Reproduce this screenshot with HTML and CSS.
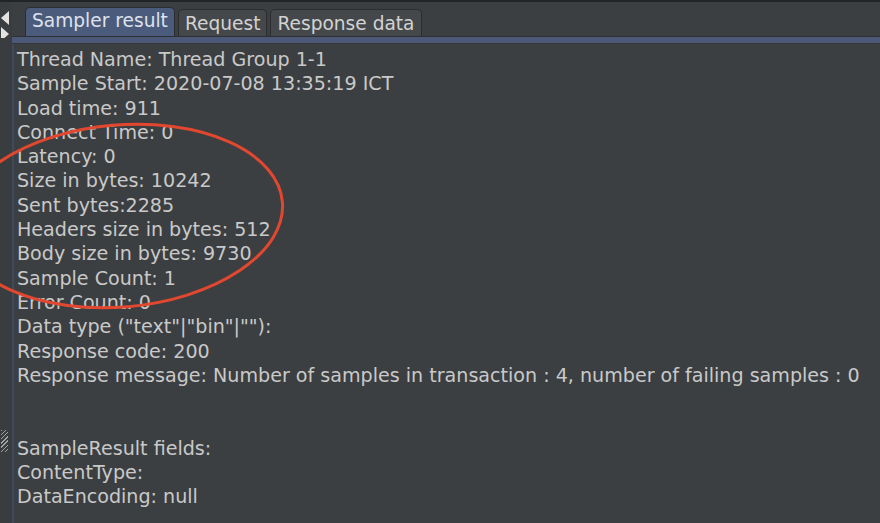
FILE: index.html
```html
<!DOCTYPE html>
<html lang="en">
<head>
  <meta charset="UTF-8" />
  <title>Sampler result</title>
  <link rel="stylesheet" href="styles.css">
</head>
<body>
  <div id="window">
    <!-- 왼쪽 분할 바 -->
    <div class="split-bar">
      <div class="arrows">
        <svg width="12" height="30" viewBox="0 0 12 30">
          <polygon points="9,3 9,17 1,10" fill="#e2e2e2"/>
          <polygon points="1,19 1,33 9,26" fill="#e2e2e2"/>
        </svg>
      </div>
      <div class="grip"></div>
    </div>

    <div class="main">
      <div class="tabs">
        <div class="tab active">Sampler result</div>
        <div class="tab">Request</div>
        <div class="tab">Response data</div>
      </div>
      <div class="tab-line"></div>

      <div class="result-panel">
        <div class="line">Thread Name: Thread Group 1-1</div>
        <div class="line">Sample Start: 2020-07-08 13:35:19 ICT</div>
        <div class="line">Load time: 911</div>
        <div class="line">Connect Time: 0</div>
        <div class="line">Latency: 0</div>
        <div class="line">Size in bytes: 10242</div>
        <div class="line">Sent bytes:2285</div>
        <div class="line">Headers size in bytes: 512</div>
        <div class="line">Body size in bytes: 9730</div>
        <div class="line">Sample Count: 1</div>
        <div class="line">Error Count: 0</div>
        <div class="line">Data type ("text"|"bin"|""):</div>
        <div class="line">Response code: 200</div>
        <div class="line">Response message: Number of samples in transaction : 4, number of failing samples : 0</div>
        <div class="line">&nbsp;</div>
        <div class="line">&nbsp;</div>
        <div class="line">SampleResult fields:</div>
        <div class="line">ContentType:</div>
        <div class="line">DataEncoding: null</div>

        <!-- 빨간 표시 -->
        <svg class="mark" width="360" height="200" viewBox="0 0 360 200">
          <ellipse cx="180" cy="98" rx="163" ry="91" fill="none" stroke="#e2472f" stroke-width="3" transform="rotate(-5 180 98)"/>
        </svg>
      </div>
    </div>
  </div>
</body>
</html>
```

FILE: styles.css
```css
/* 전체 배경 */
body {
  margin: 0;
  background: #3c3f41;
  overflow: hidden;
  font-family: "DejaVu Sans", "Liberation Sans", sans-serif;
}
#window {
  display: flex;
  width: 880px;
  height: 523px;
  border-top: 2px solid #222425;
  box-sizing: border-box;
}
/* 왼쪽 분할 바 */
.split-bar {
  width: 12px;
  flex: none;
  background: #3a3d3f;
  position: relative;
}
.arrows { margin-top: 6px; }
.grip {
  position: absolute;
  left: 1px; top: 428px;
  width: 7px; height: 22px;
  background: repeating-linear-gradient(135deg, #bdbdbd 0 1px, transparent 1px 3px);
  opacity: 0.8;
}
.main {
  flex: 1;
  display: flex;
  flex-direction: column;
  min-width: 0;
}
/* 탭 */
.tabs {
  display: flex;
  align-items: flex-end;
  gap: 3px;
  margin-top: 6px;
  padding-left: 13px;
  height: 28px;
}
.tab {
  padding: 0 6px;
  height: 26px;
  font-size: 18.6px;
  line-height: 27px;
  color: #d2d2d2;
  background: #45484a;
  border: 1px solid #2b2d2e;
  border-bottom: none;
  border-radius: 5px 5px 0 0;
}
.tab.active {
  height: 28px;
  line-height: 26px;
  background: #4b5b7c;
  color: #dde2ec;
}
.tab-line {
  height: 6px;
  background: #4b5878;
  border-top: 1px solid #2e3033;
  border-bottom: 1px solid #34373b;
}
/* 결과 영역 */
.result-panel {
  flex: 1;
  position: relative;
  border-left: 2px solid #3f4a5c;
  padding: 4px 0 0 3px;
  background: #3c3f41;
}
.line {
  font-size: 19.1px;
  line-height: 24.3px;
  color: #c9c9c9;
  white-space: pre;
}
.mark {
  position: absolute;
  left: -74px;
  top: 74px;
}
```
